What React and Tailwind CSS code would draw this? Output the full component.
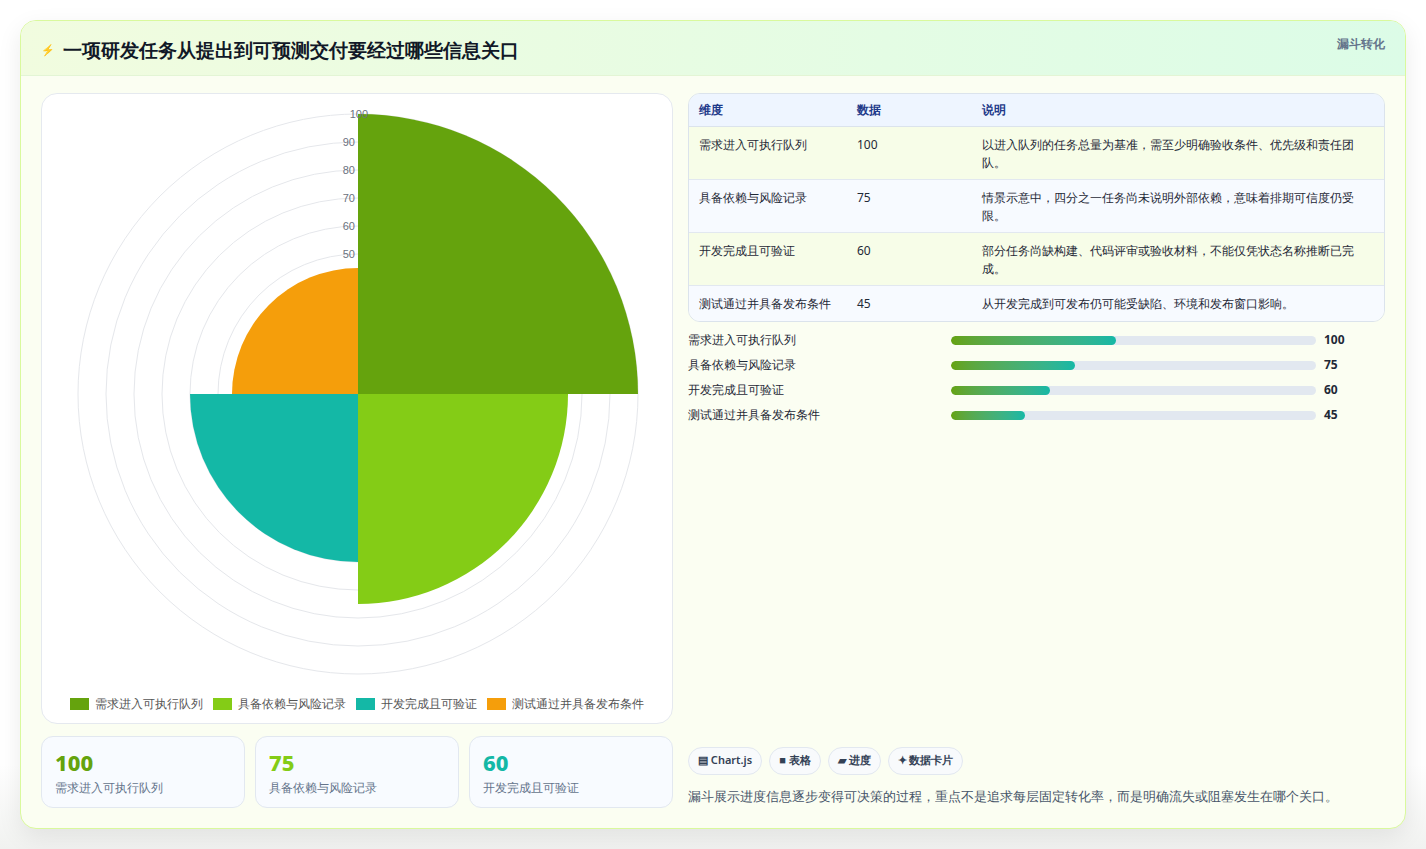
import React from "react";

const rows = [
  { name: "需求进入可执行队列", value: 100, note: "以进入队列的任务总量为基准，需至少明确验收条件、优先级和责任团队。", bg: "bg-[#f7fde8]" },
  { name: "具备依赖与风险记录", value: 75, note: "情景示意中，四分之一任务尚未说明外部依赖，意味着排期可信度仍受限。", bg: "bg-[#f7faff]" },
  { name: "开发完成且可验证", value: 60, note: "部分任务尚缺构建、代码评审或验收材料，不能仅凭状态名称推断已完成。", bg: "bg-[#f7fde8]" },
  { name: "测试通过并具备发布条件", value: 45, note: "从开发完成到可发布仍可能受缺陷、环境和发布窗口影响。", bg: "bg-[#f7faff]" },
];

const colors = ["#65a30d", "#84cc16", "#14b8a6", "#f59e0b"];

function arc(cx, cy, r, a0, a1) {
  const p = (a) => [cx + r * Math.cos(a), cy + r * Math.sin(a)];
  const [x0, y0] = p(a0);
  const [x1, y1] = p(a1);
  return `M${cx},${cy} L${x0},${y0} A${r},${r} 0 0 1 ${x1},${y1} Z`;
}

function PolarChart() {
  const cx = 316, cy = 299, k = 2.8;
  const starts = [-Math.PI / 2, 0, Math.PI / 2, Math.PI];
  return (
    <svg width="632" height="600" viewBox="0 0 632 600">
      {[1, 2, 3, 4, 5, 6, 7, 8, 9, 10].map((i) => (
        <circle key={i} cx={cx} cy={cy} r={i * 28} fill="none" stroke="#e5e7eb" strokeWidth="1" />
      ))}
      {rows.map((r, i) => (
        <path key={i} d={arc(cx, cy, r.value * k, starts[i], starts[i] + Math.PI / 2)} fill={colors[i]} />
      ))}
      {[5, 6, 7, 8, 9].map((i) => (
        <text key={i} x={cx - 3} y={cy - i * 28 + 4} textAnchor="end" fontSize="11" fill="#6b7280" fontFamily="Liberation Sans, sans-serif">{i * 10}</text>
      ))}
      <text x={cx + 10} y={cy - 280 + 4} textAnchor="end" fontSize="11" fill="#6b7280" fontFamily="Liberation Sans, sans-serif">100</text>
    </svg>
  );
}

export default function App() {
  return (
    <div className="min-h-[849px] bg-[#f5f6f4] p-5 pb-5 font-['Noto_Sans_CJK_SC',sans-serif]" style={{ background: "linear-gradient(#ffffff 0%, #ffffff 90%, #f1f2f0 100%)" }}>
      <div className="rounded-2xl border border-[#d9f99d] bg-[#fbfef2] shadow-[0_8px_24px_rgba(0,0,0,0.08)] overflow-hidden">
        {/* HEADER */}
        <div className="h-[55px] px-5 flex items-start justify-between border-b border-[#e3f5d5] bg-gradient-to-r from-[#f1fcdf] to-[#dcfce7]">
          <h1 className="mt-[15px] flex items-center gap-2 text-[19px] font-bold text-[#111827]">
            <span className="text-[11px] text-[#3b82f6]">⚡</span>
            一项研发任务从提出到可预测交付要经过哪些信息关口
          </h1>
          <span className="mt-[14px] text-[12px] font-semibold text-[#64748b]">漏斗转化</span>
        </div>

        {/* BODY */}
        <div className="px-5 pt-[17px] pb-5 flex gap-[15px]">
          <div className="w-[632px] flex flex-col gap-3">
            <div className="h-[631px] rounded-2xl border border-[#e5e9ef] bg-white overflow-hidden flex flex-col">
              <div className="pt-[1px]"><PolarChart /></div>
              <div className="flex justify-center gap-[10px] text-[12px] text-[#555]">
                {rows.map((r, i) => (
                  <span key={i} className="flex items-center gap-[6px]">
                    <span className="w-[19px] h-[12px]" style={{ background: colors[i] }} />
                    {r.name}
                  </span>
                ))}
              </div>
            </div>
            <div className="flex gap-[10px]">
              {rows.slice(0, 3).map((r, i) => (
                <div key={i} className="flex-1 h-[72px] rounded-xl border border-[#e2e8f0] bg-[#f8fbff] px-[13px] pt-[10px]">
                  <div className="text-[22px] font-extrabold leading-[30px]" style={{ color: colors[i === 2 ? 2 : i] }}>{r.value}</div>
                  <div className="text-[12px] text-[#64748b] mt-[2px]">{r.name}</div>
                </div>
              ))}
            </div>
          </div>

          <div className="flex-1 flex flex-col">
            <div className="rounded-xl border border-[#dbe3ec] overflow-hidden text-[12px] text-[#1f2937]">
              <div className="flex h-[33px] items-center bg-[#eef5ff] border-b border-[#dbe3ec] font-semibold text-[#1e3a8a]">
                <div className="w-[168px] pl-[10px]">维度</div>
                <div className="w-[125px]">数据</div>
                <div className="flex-1">说明</div>
              </div>
              {rows.map((r, i) => (
                <div key={i} className={`flex py-[9px] ${r.bg} ${i < 3 ? "border-b border-[#e2e8f0] h-[53px]" : "h-[35px]"}`}>
                  <div className="w-[168px] pl-[10px]">{r.name}</div>
                  <div className="w-[125px]">{r.value}</div>
                  <div className="flex-1 pr-[18px] leading-[18px]">{r.note}</div>
                </div>
              ))}
            </div>

            <div className="mt-[9px] flex flex-col gap-[7px]">
              {rows.map((r, i) => (
                <div key={i} className="flex items-center h-[18px] text-[12px]">
                  <div className="w-[263px] text-[#1f2937]">{r.name}</div>
                  <div className="w-[365px] h-[9px] rounded-full bg-[#e2e8f0] overflow-hidden">
                    <div className="h-full rounded-full bg-gradient-to-r from-[#65a30d] to-[#14b8a6]" style={{ width: `${r.value * 1.65}px` }} />
                  </div>
                  <div className="ml-2 font-bold text-[#1f2937]">{r.value}</div>
                </div>
              ))}
            </div>

            <div className="flex-1" />
            <div className="flex gap-[7px] text-[11px] font-semibold text-[#334155]">
              {["▤ Chart.js", "■ 表格", "▰ 进度", "✦ 数据卡片"].map((t) => (
                <span key={t} className="h-[28px] px-[9px] flex items-center rounded-full border border-[#e2e8f0] bg-[#f8fafc]">{t}</span>
              ))}
            </div>
            <p className="mt-[12px] mb-[2px] text-[13px] text-[#475569]">漏斗展示进度信息逐步变得可决策的过程，重点不是追求每层固定转化率，而是明确流失或阻塞发生在哪个关口。</p>
          </div>
        </div>
      </div>
    </div>
  );
}
